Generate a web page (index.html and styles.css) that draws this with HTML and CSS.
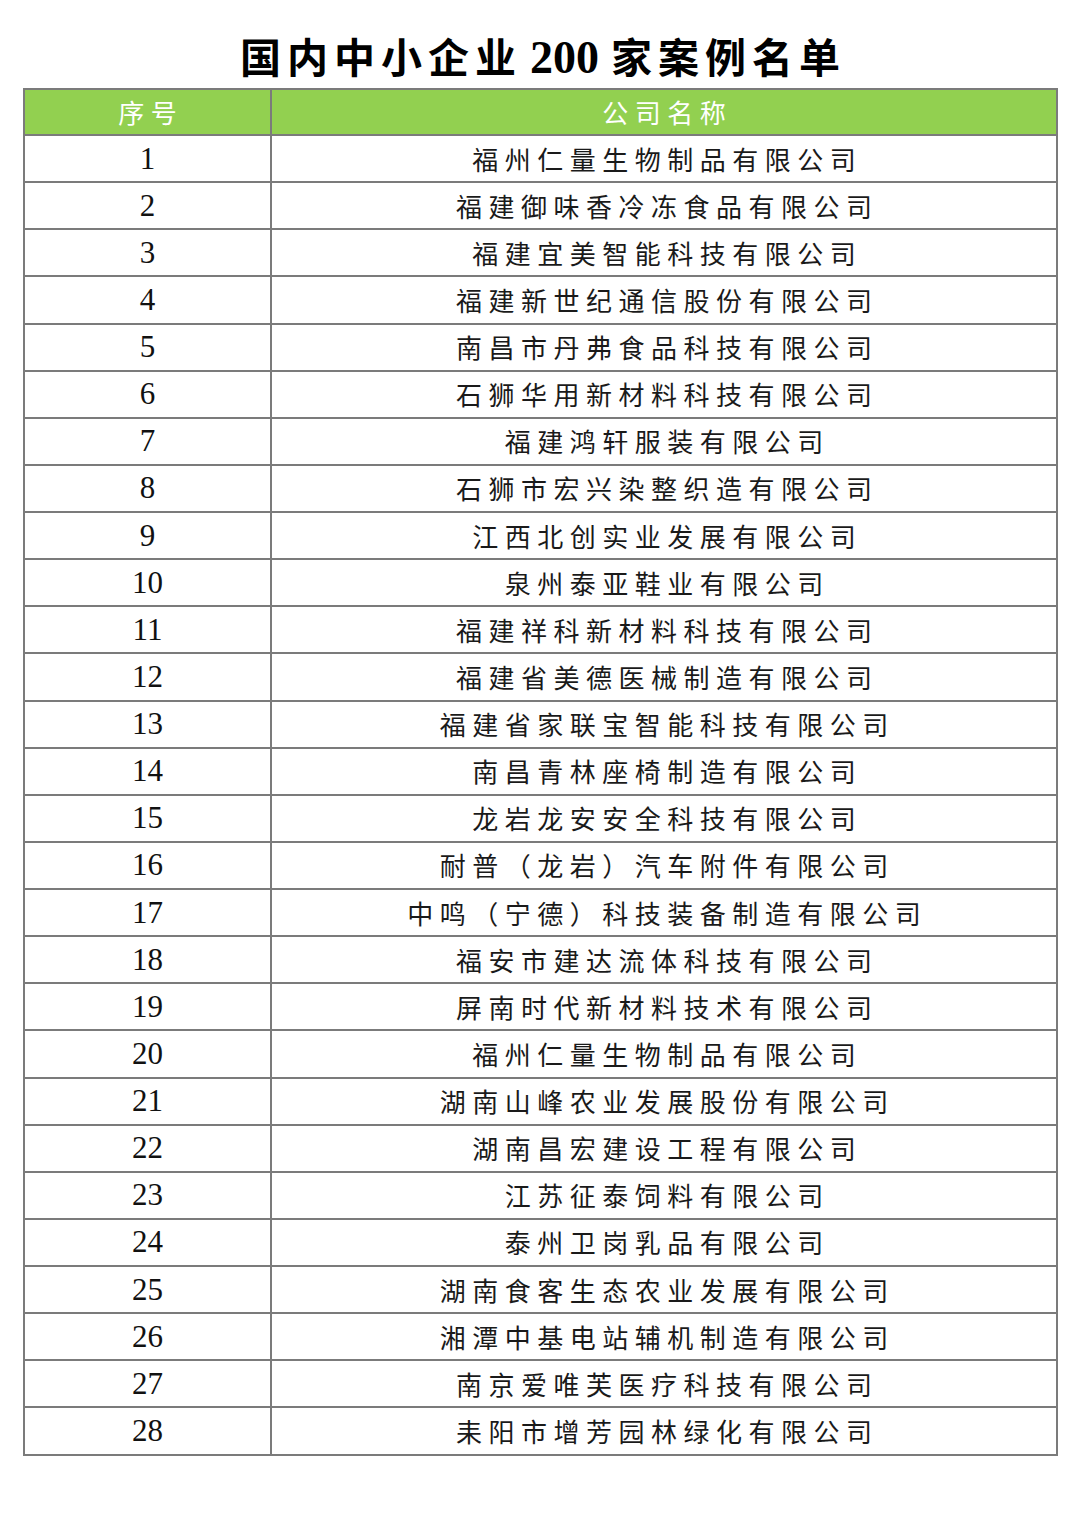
FILE: index.html
```html
<!DOCTYPE html>
<html lang="zh-CN">
<head>
<meta charset="utf-8">
<title>国内中小企业200家案例名单</title>
<link rel="stylesheet" href="styles.css">
</head>
<body>
<h1 class="title">国内中小企业<span class="num">200</span>家案例名单</h1>
<table class="list">
<thead>
<tr><th class="c1"><span class="t">序号</span></th><th class="c2"><span class="t">公司名称</span></th></tr>
</thead>
<tbody>
<tr><td class="c1">1</td><td class="c2"><span class="t">福州仁量生物制品有限公司</span></td></tr>
<tr><td class="c1">2</td><td class="c2"><span class="t">福建御味香冷冻食品有限公司</span></td></tr>
<tr><td class="c1">3</td><td class="c2"><span class="t">福建宜美智能科技有限公司</span></td></tr>
<tr><td class="c1">4</td><td class="c2"><span class="t">福建新世纪通信股份有限公司</span></td></tr>
<tr><td class="c1">5</td><td class="c2"><span class="t">南昌市丹弗食品科技有限公司</span></td></tr>
<tr><td class="c1">6</td><td class="c2"><span class="t">石狮华用新材料科技有限公司</span></td></tr>
<tr><td class="c1">7</td><td class="c2"><span class="t">福建鸿轩服装有限公司</span></td></tr>
<tr><td class="c1">8</td><td class="c2"><span class="t">石狮市宏兴染整织造有限公司</span></td></tr>
<tr><td class="c1">9</td><td class="c2"><span class="t">江西北创实业发展有限公司</span></td></tr>
<tr><td class="c1">10</td><td class="c2"><span class="t">泉州泰亚鞋业有限公司</span></td></tr>
<tr><td class="c1">11</td><td class="c2"><span class="t">福建祥科新材料科技有限公司</span></td></tr>
<tr><td class="c1">12</td><td class="c2"><span class="t">福建省美德医械制造有限公司</span></td></tr>
<tr><td class="c1">13</td><td class="c2"><span class="t">福建省家联宝智能科技有限公司</span></td></tr>
<tr><td class="c1">14</td><td class="c2"><span class="t">南昌青林座椅制造有限公司</span></td></tr>
<tr><td class="c1">15</td><td class="c2"><span class="t">龙岩龙安安全科技有限公司</span></td></tr>
<tr><td class="c1">16</td><td class="c2"><span class="t">耐普（龙岩）汽车附件有限公司</span></td></tr>
<tr><td class="c1">17</td><td class="c2"><span class="t">中鸣（宁德）科技装备制造有限公司</span></td></tr>
<tr><td class="c1">18</td><td class="c2"><span class="t">福安市建达流体科技有限公司</span></td></tr>
<tr><td class="c1">19</td><td class="c2"><span class="t">屏南时代新材料技术有限公司</span></td></tr>
<tr><td class="c1">20</td><td class="c2"><span class="t">福州仁量生物制品有限公司</span></td></tr>
<tr><td class="c1">21</td><td class="c2"><span class="t">湖南山峰农业发展股份有限公司</span></td></tr>
<tr><td class="c1">22</td><td class="c2"><span class="t">湖南昌宏建设工程有限公司</span></td></tr>
<tr><td class="c1">23</td><td class="c2"><span class="t">江苏征泰饲料有限公司</span></td></tr>
<tr><td class="c1">24</td><td class="c2"><span class="t">泰州卫岗乳品有限公司</span></td></tr>
<tr><td class="c1">25</td><td class="c2"><span class="t">湖南食客生态农业发展有限公司</span></td></tr>
<tr><td class="c1">26</td><td class="c2"><span class="t">湘潭中基电站辅机制造有限公司</span></td></tr>
<tr><td class="c1">27</td><td class="c2"><span class="t">南京爱唯芙医疗科技有限公司</span></td></tr>
<tr><td class="c1">28</td><td class="c2"><span class="t">耒阳市增芳园林绿化有限公司</span></td></tr>
</tbody>
</table>
</body>
</html>
```
FILE: styles.css
```css
html, body {
  margin: 0;
  padding: 0;
  background: #ffffff;
}
body {
  width: 1080px;
  height: 1527px;
  overflow: hidden;
  color: #111111;
  font-family: "Noto Sans CJK SC", "Noto Sans", sans-serif;
}
.title {
  margin: 0;
  height: 88px;
  box-sizing: border-box;
  padding-top: 26px;
  line-height: 58px;
  font-size: 41px;
  font-weight: 700;
  text-align: center;
  letter-spacing: 6px;
  text-indent: 6px;
  color: #000000;
}
.title .num {
  font-family: "Liberation Serif", serif;
  font-size: 46px;
  letter-spacing: 0;
  padding: 0 12px 0 8px;
}
.list {
  margin-left: 23px;
  width: 1035px;
  border-collapse: collapse;
  table-layout: fixed;
}
.list th, .list td {
  border: 2px solid #7b7b7b;
  padding: 0;
  text-align: center;
  vertical-align: middle;
  line-height: 30px;
}
.list th {
  height: 44px;
  background: #92d050;
  color: #ffffff;
  font-weight: 400;
  font-size: 26px;
}
.list td {
  height: 45.14px;
}
.c1 {
  width: 245px;
}
td.c1 {
  font-family: "Liberation Serif", serif;
  font-size: 31px;
  color: #111111;
}
td.c2 {
  font-size: 26px;
  color: #1a1a1a;
}
.t {
  letter-spacing: 6.5px;
  margin-right: -6.5px;
}
```
